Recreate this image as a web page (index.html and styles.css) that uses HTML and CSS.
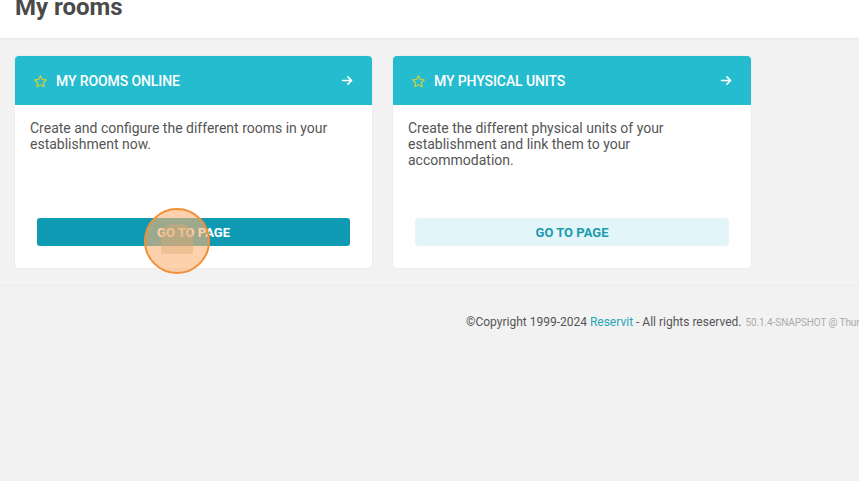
FILE: index.html
```html
<!DOCTYPE html>
<html lang="en">
<head>
<meta charset="utf-8">
<title>My rooms</title>
<link rel="stylesheet" href="styles.css">
</head>
<body>
<header class="page-header">
  <h1 class="page-title">My rooms</h1>
</header>
<main class="content">
  <section class="card">
    <div class="card-head">
      <svg class="star" viewBox="0 0 24 24" width="15" height="15"><path d="M12 2.8l2.8 5.9 6.4.8-4.7 4.4 1.2 6.4L12 17.2l-5.7 3.1 1.2-6.4-4.7-4.4 6.4-.8z" fill="none" stroke="#c9cf3e" stroke-width="2" stroke-linejoin="round"/></svg>
      <span class="card-title">My rooms online</span>
      <svg class="arrow" viewBox="0 0 16 16" width="13" height="13"><path d="M2 8h11M8.5 3.5L13 8l-4.5 4.5" fill="none" stroke="#fff" stroke-width="2" stroke-linecap="round" stroke-linejoin="round"/></svg>
    </div>
    <div class="card-body">
      <p class="card-text">Create and configure the different rooms in your establishment now.</p>
      <button class="btn btn-primary">Go to page</button>
    </div>
  </section>
  <section class="card">
    <div class="card-head">
      <svg class="star" viewBox="0 0 24 24" width="15" height="15"><path d="M12 2.8l2.8 5.9 6.4.8-4.7 4.4 1.2 6.4L12 17.2l-5.7 3.1 1.2-6.4-4.7-4.4 6.4-.8z" fill="none" stroke="#c9cf3e" stroke-width="2" stroke-linejoin="round"/></svg>
      <span class="card-title">My physical units</span>
      <svg class="arrow" viewBox="0 0 16 16" width="13" height="13"><path d="M2 8h11M8.5 3.5L13 8l-4.5 4.5" fill="none" stroke="#fff" stroke-width="2" stroke-linecap="round" stroke-linejoin="round"/></svg>
    </div>
    <div class="card-body">
      <p class="card-text">Create the different physical units of your establishment and link them to your accommodation.</p>
      <button class="btn btn-light">Go to page</button>
    </div>
  </section>
</main>
<footer class="footer">
  <span>©Copyright 1999-2024 <a class="footer-link" href="#">Reservit</a> - All rights reserved.</span>
  <span class="version">50.1.4-SNAPSHOT @ Thursday 14 March 2024</span>
</footer>
<div class="click-marker"><div class="click-core"></div></div>
</body>
</html>
```

FILE: styles.css
```css
html, body {
  margin: 0;
  padding: 0;
}
body {
  font-family: Roboto, "Liberation Sans", sans-serif;
  background: #f2f2f2;
  color: #555;
  width: 859px;
  height: 481px;
  overflow: hidden;
  position: relative;
}
.page-header {
  height: 38px;
  background: #fff;
  padding: 0 15px;
  box-sizing: border-box;
  overflow: hidden;
  box-shadow: 0 1px 2px rgba(0,0,0,0.05);
}
.page-title {
  margin: -5px 0 0;
  font-size: 24px;
  line-height: 24px;
  font-weight: 700;
  color: #4a4a4a;
}
.content {
  display: flex;
  gap: 21px;
  padding: 18px 15px 17px;
}
.card {
  width: 357px;
  height: 212px;
  background: #fff;
  border-radius: 4px;
  box-shadow: 0 0 2px rgba(0,0,0,0.08);
  display: flex;
  flex-direction: column;
  overflow: hidden;
}
.card + .card {
  width: 358px;
}
.card-head {
  height: 49px;
  background: #26bccf;
  display: flex;
  align-items: center;
  padding: 0 18px 0 18px;
  gap: 8px;
}
.star {
  flex: none;
  margin-top: 1px;
}
.card-title {
  flex: 1;
  color: #fff;
  font-size: 14px;
  font-weight: 500;
  text-transform: uppercase;
  letter-spacing: -0.1px;
}
.arrow {
  flex: none;
}
.card-body {
  flex: 1;
  display: flex;
  flex-direction: column;
  padding: 15px 22px 22px 15px;
}
.card-text {
  margin: 0;
  font-size: 14px;
  line-height: 16px;
  color: #555;
  flex: 1;
}
.btn {
  margin-left: 7px;
  height: 28px;
  border: 0;
  border-radius: 3px;
  font-family: Roboto, "Liberation Sans", sans-serif;
  font-size: 13px;
  font-weight: 700;
  text-transform: uppercase;
  cursor: pointer;
}
.btn-primary {
  background: #0f9ab4;
  color: #fff;
}
.btn-light {
  background: #e2f6fa;
  color: #1b9aad;
}
.footer {
  border-top: 1px solid #ebebeb;
  padding: 29px 0 0 466px;
  white-space: nowrap;
  font-size: 12px;
  color: #555;
  overflow: hidden;
}
.footer-link {
  color: #26a6b8;
  text-decoration: none;
}
.version {
  font-size: 10px;
  color: #aaa;
  margin-left: 1px;
  letter-spacing: -0.1px;
}
.click-marker {
  position: absolute;
  left: 144px;
  top: 208px;
  width: 62px;
  height: 62px;
  border: 2px solid #f28f36;
  border-radius: 50%;
  background: rgba(252, 178, 115, 0.6);
  display: flex;
  align-items: center;
  justify-content: center;
}
.click-core {
  width: 32px;
  height: 30px;
  border-radius: 12px 12px 2px 2px;
  background: rgba(220, 170, 120, 0.45);
  margin-top: -4px;
}
```
